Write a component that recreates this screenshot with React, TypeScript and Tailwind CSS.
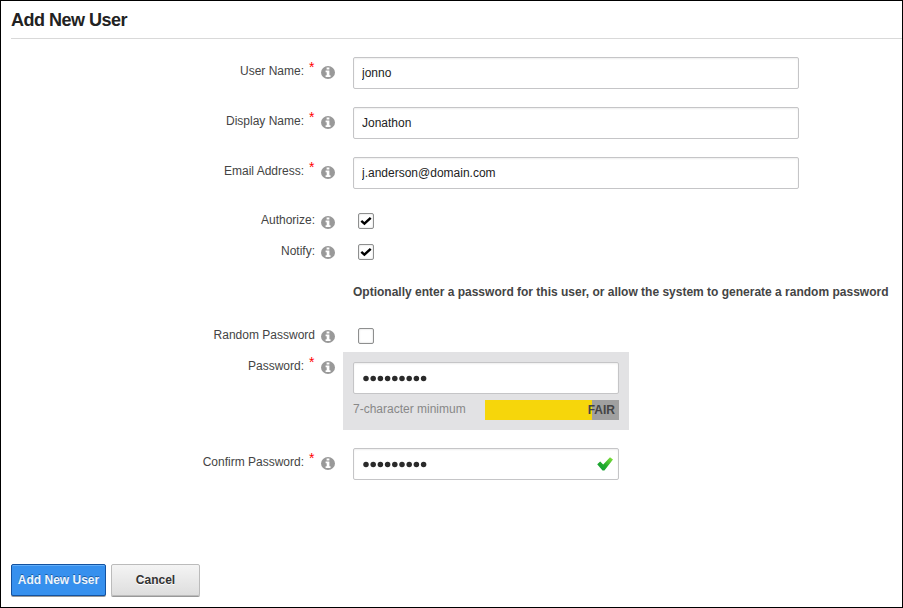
import type { ReactNode } from "react";

function InfoIcon({ className }: { className: string }) {
  return (
    <svg className={`ml-[6px] h-[13px] w-[14px] shrink-0 ${className}`} viewBox="0 0 14 13">
      <ellipse cx="7" cy="6.5" rx="7" ry="6.5" fill="#999" />
      <path d="M5.6 1.4h2.8v2.2H5.6zM4.6 4.6h3.8v4.6h1.1v1.7H4.6V9.2h1.1V6.3H4.6z" fill="#fff" />
    </svg>
  );
}

interface RowProps {
  label: string;
  required?: boolean;
  className: string;
  iconClass?: string;
  children: ReactNode;
}

function Row({ label, required, className, iconClass = "mt-[9px]", children }: RowProps) {
  return (
    <div className={`flex items-start ${className}`}>
      <div className="flex w-[334px] shrink-0 items-start justify-end">
        <span className="mt-[6px] whitespace-nowrap leading-4">{label}</span>
        {required && <span className="mt-[2px] ml-[5px] w-[6px] text-[14px] leading-4 text-[#f00]">*</span>}
        <InfoIcon className={iconClass} />
      </div>
      {children}
    </div>
  );
}

const inputStyle =
  "h-8 rounded-[2px] border border-[#c5c5c7] bg-white pl-2 pb-px text-[12px] text-[#222] shadow-[inset_0_1px_2px_#eee] outline-none";

function Checkbox({ checked }: { checked?: boolean }) {
  return (
    <span className="mt-[7px] ml-[23px] flex size-4 items-center justify-center rounded-[2px] border border-[#8e8f8f] bg-white shadow-[inset_0_0_2px_#ccc]">
      {checked && (
        <svg className="h-3 w-3" viewBox="0 0 12 12">
          <path d="M1.3 5.9 4.4 8.6 10.7 2.8" fill="none" stroke="#000" strokeWidth="2.5" />
        </svg>
      )}
    </span>
  );
}

function Dots() {
  return (
    <svg className="h-2 w-[66px]" viewBox="0 0 66 8">
      {Array.from({ length: 9 }, (_, i) => (
        <circle key={i} cx={4 + i * 7.2} cy="4.5" r="2.75" fill="#2a2a2a" />
      ))}
    </svg>
  );
}

export default function App() {
  return (
    <div className="flex h-[608px] w-[903px] flex-col overflow-hidden border border-black bg-white font-['Liberation_Sans',Arial,sans-serif] text-[12px] text-[#444]">
      <h1 className="ml-[10px] h-[38px] shrink-0 border-b border-[#d9d9d9] pt-[7px] text-[18px] leading-6 font-bold tracking-[-0.5px] text-[#222]">Add New User</h1>
      <Row label="User Name:" required className="mt-[18px] h-8">
        <input className={`${inputStyle} ml-[18px] w-[446px]`} defaultValue="jonno" />
      </Row>
      <Row label="Display Name:" required className="mt-[18px] h-8">
        <input className={`${inputStyle} ml-[18px] w-[446px]`} defaultValue="Jonathon" />
      </Row>
      <Row label="Email Address:" required className="mt-[18px] h-8">
        <input className={`${inputStyle} ml-[18px] w-[446px]`} defaultValue="j.anderson@domain.com" />
      </Row>
      <Row label="Authorize:" className="mt-[17px] h-[31px]" iconClass="mt-[10px]"><Checkbox checked /></Row>
      <Row label="Notify:" className="h-[31px]"><Checkbox checked /></Row>
      <p className="mt-4 ml-[352px] whitespace-nowrap leading-4 font-bold">
        Optionally enter a password for this user, or allow the system to generate a random password
      </p>
      <Row label="Random Password" className="mt-[21px] h-[31px]"><Checkbox /></Row>
      <Row label="Password:" required className="h-[78px]">
        <div className="ml-[8px] h-[78px] w-[286px] bg-[#e2e2e4] px-[10px] pt-[10px]">
          <div className={`${inputStyle} flex items-center pt-px`}><Dots /></div>
          <div className="mt-[6px] flex justify-between">
            <span className="whitespace-nowrap leading-[18px] text-[#888]">7-character minimum</span>
            <div className="h-5 w-[134px] bg-[linear-gradient(to_right,#f6d60b_107px,#a0a0a0_107px)] pr-[4px] text-right leading-5 font-bold text-[#444]">FAIR</div>
          </div>
        </div>
      </Row>
      <Row label="Confirm Password:" required className="mt-[18px] h-8">
        <div className={`${inputStyle} ml-[18px] flex w-[266px] items-center justify-between pt-px pr-[5px]`}>
          <Dots />
          <svg className="h-[14px] w-[16px]" viewBox="0 0 16 14">
            <defs>
              <linearGradient id="tick" x1="1" y1="0" x2="0" y2="1">
                <stop offset="0" stopColor="#8ce63c" />
                <stop offset="0.55" stopColor="#21ac2c" />
                <stop offset="1" stopColor="#139a38" />
              </linearGradient>
            </defs>
            <path d="M.2 7.2 3.2 4.6 6.2 7.4 13 .2 16 2.6 7.4 13.6H5.5z" fill="url(#tick)" />
          </svg>
        </div>
      </Row>
      <div className="mt-[84px] ml-[10px] flex gap-[5px] text-[12px] font-bold">
        <button className="h-8 w-[95px] whitespace-nowrap rounded-[2px] border border-[#1352a0] bg-[#3690ee] text-[#eef5fc] shadow-[inset_0_1px_0_#62aef8,0_1px_0_#999] [text-shadow:0_-1px_0_#1c5da5]">Add New User</button>
        <button className="h-8 w-[89px] rounded-[2px] border border-[#bbb] bg-linear-to-b from-[#f4f4f4] to-[#dedede] text-[#333] shadow-[0_1px_0_#999] [text-shadow:0_1px_0_#fff]">Cancel</button>
      </div>
    </div>
  );
}
